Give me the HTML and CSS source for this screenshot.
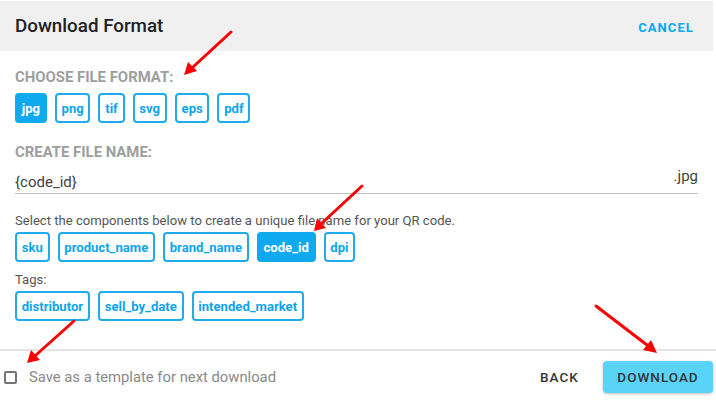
FILE: index.html
```html
<!DOCTYPE html>
<html lang="en">
<head>
    <meta charset="UTF-8">
    <meta name="viewport" content="width=device-width, initial-scale=1.0">
    <title>Download Format</title>
    <link rel="stylesheet" href="styles.css">
</head>
<body>
    <div class="dialog">
        <div class="header">
            <h1>Download Format</h1>
            <button class="text-btn cancel" type="button">CANCEL</button>
        </div>

        <div class="content">
            <div class="section-label first">CHOOSE FILE FORMAT:</div>
            <div class="chips">
                <span class="chip active">jpg</span>
                <span class="chip">png</span>
                <span class="chip">tif</span>
                <span class="chip">svg</span>
                <span class="chip">eps</span>
                <span class="chip">pdf</span>
            </div>

            <div class="section-label second">CREATE FILE NAME:</div>
            <div class="name-field">
                <input type="text" id="fileName" value="{code_id}">
                <span class="suffix">.jpg</span>
            </div>

            <p class="hint">Select the components below to create a unique file name for your QR code.</p>
            <div class="chips">
                <span class="chip">sku</span>
                <span class="chip">product_name</span>
                <span class="chip">brand_name</span>
                <span class="chip active">code_id</span>
                <span class="chip">dpi</span>
            </div>

            <p class="hint tags">Tags:</p>
            <div class="chips">
                <span class="chip">distributor</span>
                <span class="chip">sell_by_date</span>
                <span class="chip">intended_market</span>
            </div>
        </div>

        <div class="footer">
            <label class="save">
                <span class="box"></span>
                Save as a template for next download
            </label>
            <div class="actions">
                <button class="text-btn back" type="button">BACK</button>
                <button class="download" type="button">DOWNLOAD</button>
            </div>
        </div>

        <!-- annotation arrows -->
        <svg class="arrows" width="716" height="403" viewBox="0 0 716 403">
            <g stroke="#ff0000" stroke-width="3" stroke-linecap="round">
                <line x1="231" y1="32" x2="193" y2="67"/>
                <line x1="362" y1="186" x2="322" y2="223"/>
                <line x1="74" y1="321" x2="36" y2="355"/>
                <line x1="596" y1="306" x2="647" y2="345"/>
            </g>
            <g fill="#ff0000">
                <polygon points="184,75 188,62 197,71"/>
                <polygon points="314,231 317,218 326,228"/>
                <polygon points="27,363 31,350 40,360"/>
                <polygon points="657,353 643,350 651,340"/>
            </g>
        </svg>
    </div>
</body>
</html>
```

FILE: styles.css
```css
body {
    margin: 0;
    font-family: Roboto, "Noto Sans", Arial, sans-serif;
    background-color: #ffffff;
}

.dialog {
    position: relative;
    width: 716px;
    height: 403px;
    padding-top: 1px;
    box-sizing: border-box;
    display: flex;
    flex-direction: column;
}

.header {
    height: 50px;
    margin-right: 3px;
    background-color: #f0f0f0;
    display: flex;
    justify-content: space-between;
    align-items: center;
    padding: 0 19px 0 15px;
}

h1 {
    margin: 0;
    font-size: 18.8px;
    font-weight: 500;
    color: #212121;
}

.text-btn {
    background: none;
    border: none;
    padding: 0;
    font-family: inherit;
    font-size: 13px;
    font-weight: 500;
    letter-spacing: 1.3px;
    cursor: pointer;
}

.cancel {
    color: #03a9f4;
    font-weight: 700;
    margin-top: 2px;
    letter-spacing: 1.1px;
}

.content {
    flex: 1;
    padding: 0 18px 0 15px;
}

.section-label {
    font-size: 14.9px;
    font-weight: 700;
    color: #9e9e9e;
    line-height: 16px;
}

.section-label.first {
    margin-top: 18px;
}

.section-label.second {
    margin-top: 21px;
}

.chips {
    display: flex;
    gap: 8px;
    margin-top: 8px;
}

.chip {
    height: 30px;
    box-sizing: border-box;
    display: flex;
    align-items: center;
    padding: 0 4.75px;
    border: 2px solid #1fabec;
    border-radius: 4px;
    color: #0ea5ec;
    font-size: 13.1px;
    font-weight: 700;
}

.chip.active {
    background-color: #0ea9ef;
    border-color: #0ea9ef;
    color: #ffffff;
}

.name-field {
    display: flex;
    align-items: flex-start;
    margin-top: 11px;
    border-bottom: 1px solid #bdbdbd;
    height: 22px;
}

.name-field input {
    flex: 1;
    border: none;
    outline: none;
    padding: 0;
    font-family: inherit;
    font-size: 15px;
    color: #424242;
    height: 20px;
    margin-top: 1px;
}

.suffix {
    font-size: 15px;
    color: #424242;
    margin-top: -4px;
}

.hint {
    margin: 19px 0 0;
    font-size: 13.1px;
    color: #555555;
    line-height: 15px;
}

.chips + .hint.tags {
    margin-top: 10px;
}

.hint + .chips {
    margin-top: 4px;
}

.footer {
    height: 52px;
    border-top: 2px solid #e4e4e4;
    display: flex;
    justify-content: space-between;
    align-items: center;
    padding: 0 3px 0 4px;
}

.save {
    display: flex;
    align-items: center;
    gap: 12px;
    font-size: 14.8px;
    color: #8a8a8a;
}

.box {
    width: 13px;
    height: 13px;
    box-sizing: border-box;
    border: 2px solid #757575;
    border-radius: 2px;
}

.actions {
    display: flex;
    align-items: center;
    gap: 24px;
}

.back {
    color: #333333;
    font-size: 13.5px;
    letter-spacing: 1.1px;
}

.download {
    width: 110px;
    height: 32px;
    border: none;
    border-radius: 4px;
    background-color: #5ad3f8;
    color: #333333;
    font-family: inherit;
    font-size: 13.5px;
    font-weight: 500;
    letter-spacing: 1px;
    box-shadow: 0 1px 3px rgba(0, 0, 0, 0.25);
    cursor: pointer;
}

.arrows {
    position: absolute;
    left: 0;
    top: 0;
    pointer-events: none;
}
```
